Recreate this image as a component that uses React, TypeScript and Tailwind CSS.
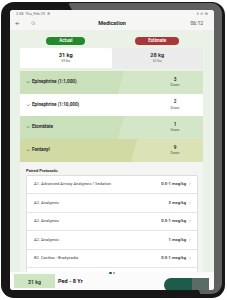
import React from 'react';
import {
  ArrowLeft,
  Search,
  ChevronDown,
  ChevronUp,
  ChevronRight,
  Bluetooth,
  Wifi,
  BatteryFull,
  Settings,
} from 'lucide-react';

type Tone = 'green' | 'white' | 'olive';

const medications: { name: string; doses: number; tone: Tone; open?: boolean }[] = [
  { name: 'Epinephrine (1:1,000)', doses: 3, tone: 'green' },
  { name: 'Epinephrine (1:10,000)', doses: 2, tone: 'white' },
  { name: 'Etomidate', doses: 1, tone: 'green' },
  { name: 'Fentanyl', doses: 9, tone: 'olive', open: true },
];

const protocols = [
  { name: 'A1. Advanced Airway Analgesic / Sedation', dose: '0.5-1 mcg/kg' },
  { name: 'A2. Analgesic', dose: '2 mcg/kg' },
  { name: 'A2. Analgesic', dose: '0.5-1 mcg/kg' },
  { name: 'A2. Analgesic', dose: '1 mcg/kg' },
  { name: 'B2. Cardiac - Bradycadia', dose: '0.5-1 mcg/kg' },
];

const toneClass: Record<Tone, string> = {
  green: 'bg-[linear-gradient(105deg,#c9e0bb_55%,#d3e7c8_55%)]',
  white: 'bg-white',
  olive: 'bg-[linear-gradient(105deg,#d2daa3_62%,#dbe2b6_62%)]',
};

const MedRow: React.FC<{ name: string; doses: number; tone: Tone; open?: boolean }> = ({
  name,
  doses,
  tone,
  open,
}) => (
  <div className={`flex h-[22.7px] items-center ${toneClass[tone]}`}>
    <div className="flex flex-1 items-center gap-[1.5px] pl-[6px]">
      {open ? (
        <ChevronUp size={4.5} strokeWidth={2.5} className="text-[#333]" />
      ) : (
        <ChevronDown size={4.5} strokeWidth={2.5} className="text-[#333]" />
      )}
      <span className="text-[4.6px] font-bold text-[#2b2b2b]">{name}</span>
    </div>
    <div className="mr-[18px] flex w-[20px] flex-col items-center leading-none">
      <span className="text-[4.8px] font-semibold text-[#2b2b2b]">{doses}</span>
      <span className="mt-[1.5px] text-[3.2px] text-[#555]">Doses</span>
    </div>
  </div>
);

export default function App() {
  return (
    <div className="h-[300px] w-[227px] overflow-hidden bg-white pl-[1px] pt-[2px] font-['Roboto',sans-serif]">
      {/* tablet bezel */}
      <div className="relative h-[296px] w-[224px] rounded-[13px] bg-[#171717] pl-[9px] pt-[8px]">
        {/* bezel reflection */}
        <div className="absolute bottom-[4px] right-[3px] top-[1px] w-[154px] rounded-r-[11px] rounded-tl-[3px] bg-[#606060] [clip-path:polygon(0_0,100%_0,100%_100%,86%_100%,3%_8px)]" />

        {/* screen */}
        <div className="relative z-10 flex h-[280px] w-[204px] flex-col overflow-hidden rounded-[3px] bg-[#eaf1e7]">
          {/* status bar */}
          <div className="flex h-[7px] items-center justify-between bg-[#f6f7f5] px-[6px] text-[3.8px] text-[#666]">
            <div className="flex items-center gap-[2px]">
              <span>2:38</span>
              <span>Thu, Feb 29</span>
              <Settings size={3.5} strokeWidth={2} />
            </div>
            <div className="flex items-center gap-[1px]">
              <Bluetooth size={3.5} strokeWidth={2} />
              <Wifi size={3.5} strokeWidth={2} />
              <BatteryFull size={3.5} strokeWidth={2} />
            </div>
          </div>

          {/* header */}
          <div className="grid h-[13px] grid-cols-[1fr_auto_1fr] items-center bg-[#f6f7f5]">
            <div className="flex items-center gap-[11px] pl-[4.5px]">
              <ArrowLeft size={5} strokeWidth={2.2} className="text-[#333]" />
              <Search size={4.5} strokeWidth={2} className="text-[#888]" />
            </div>
            <span className="text-[5.5px] font-bold text-[#2b2b2b]">Medication</span>
            <span className="justify-self-end pr-[11px] text-[5px] text-[#444]">06:12</span>
          </div>

          {/* content */}
          <div className="flex-1 overflow-hidden pl-[10px] pr-[11px] pt-[7px]">
            <div className="grid grid-cols-2">
              <div className="flex justify-center">
                <div className="flex h-[8px] w-[39px] items-center justify-center rounded-full bg-[#24892c] text-[4.6px] font-semibold text-white">
                  Actual
                </div>
              </div>
              <div className="flex justify-center">
                <div className="flex h-[8px] w-[44px] items-center justify-center rounded-full bg-[#a8363a] text-[4.6px] font-semibold text-white">
                  Estimate
                </div>
              </div>
            </div>

            <div className="mt-[3px] grid h-[20px] grid-cols-2">
              <div className="flex flex-col items-center justify-center rounded-[1.5px] bg-white leading-none">
                <span className="text-[5.6px] font-bold text-[#222]">31 kg</span>
                <span className="mt-[2px] text-[3.2px] text-[#555]">69 lbs</span>
              </div>
              <div className="flex flex-col items-center justify-center bg-[#ebebeb] leading-none">
                <span className="text-[5.6px] font-bold text-[#333]">28 kg</span>
                <span className="mt-[2px] text-[3.2px] text-[#666]">62 lbs</span>
              </div>
            </div>

            <div className="mt-[3px] flex flex-col">
              {medications.map((m) => (
                <MedRow key={m.name} {...m} />
              ))}
            </div>

            {/* expanded Fentanyl */}
            <div className="bg-[#f4f5f3] pb-[4px] pl-[6px] pr-[5px] pt-[7px]">
              <div className="text-[4.2px] font-bold leading-[4.5px] text-[#333]">Paired Protocols:</div>
              <div className="mt-[1.5px] rounded-[2px] border border-[#dcdedb] bg-white">
                {protocols.map((p, i) => (
                  <div
                    key={i}
                    className="flex h-[18.5px] items-center justify-between border-b border-[#e4e5e3] pl-[7px] pr-[5px]"
                  >
                    <span className="text-[4.1px] text-[#444]">{p.name}</span>
                    <div className="flex items-center gap-[2px]">
                      <span className="text-[4.1px] font-semibold text-[#333]">{p.dose}</span>
                      <ChevronRight size={4} strokeWidth={2} className="text-[#666]" />
                    </div>
                  </div>
                ))}
                <div className="h-[18.5px]" />
              </div>
            </div>
          </div>

          {/* bottom bar */}
          <div className="flex h-[18px] flex-col bg-[#fbfbfb]">
            <div className="flex h-[5px] items-end justify-center gap-[1px]">
              <span className="h-[2.2px] w-[2.2px] rounded-full bg-[#1f5e4d]" />
              <span className="h-[2.2px] w-[2.2px] rounded-full border-[0.5px] border-[#777]" />
            </div>
            <div className="flex flex-1 items-start">
              <div className="ml-[4px] flex h-[14px] w-[41px] justify-center bg-[#cde5c0] pt-[6px] text-[5.2px] font-semibold leading-[5.5px] text-[#2b2b2b]">
                31 kg
              </div>
              <span className="ml-[3px] mt-[4px] text-[5.6px] font-bold leading-[6px] text-[#222]">Ped - 8 Yr</span>
              <div className="ml-auto mr-[5px] mt-[4px] h-[14px] w-[45px] rounded-l-full rounded-tr-[8px] bg-[linear-gradient(90deg,#1d5b4b_62%,#5b6b67_62%)]" />
            </div>
          </div>
        </div>
      </div>
    </div>
  );
}
